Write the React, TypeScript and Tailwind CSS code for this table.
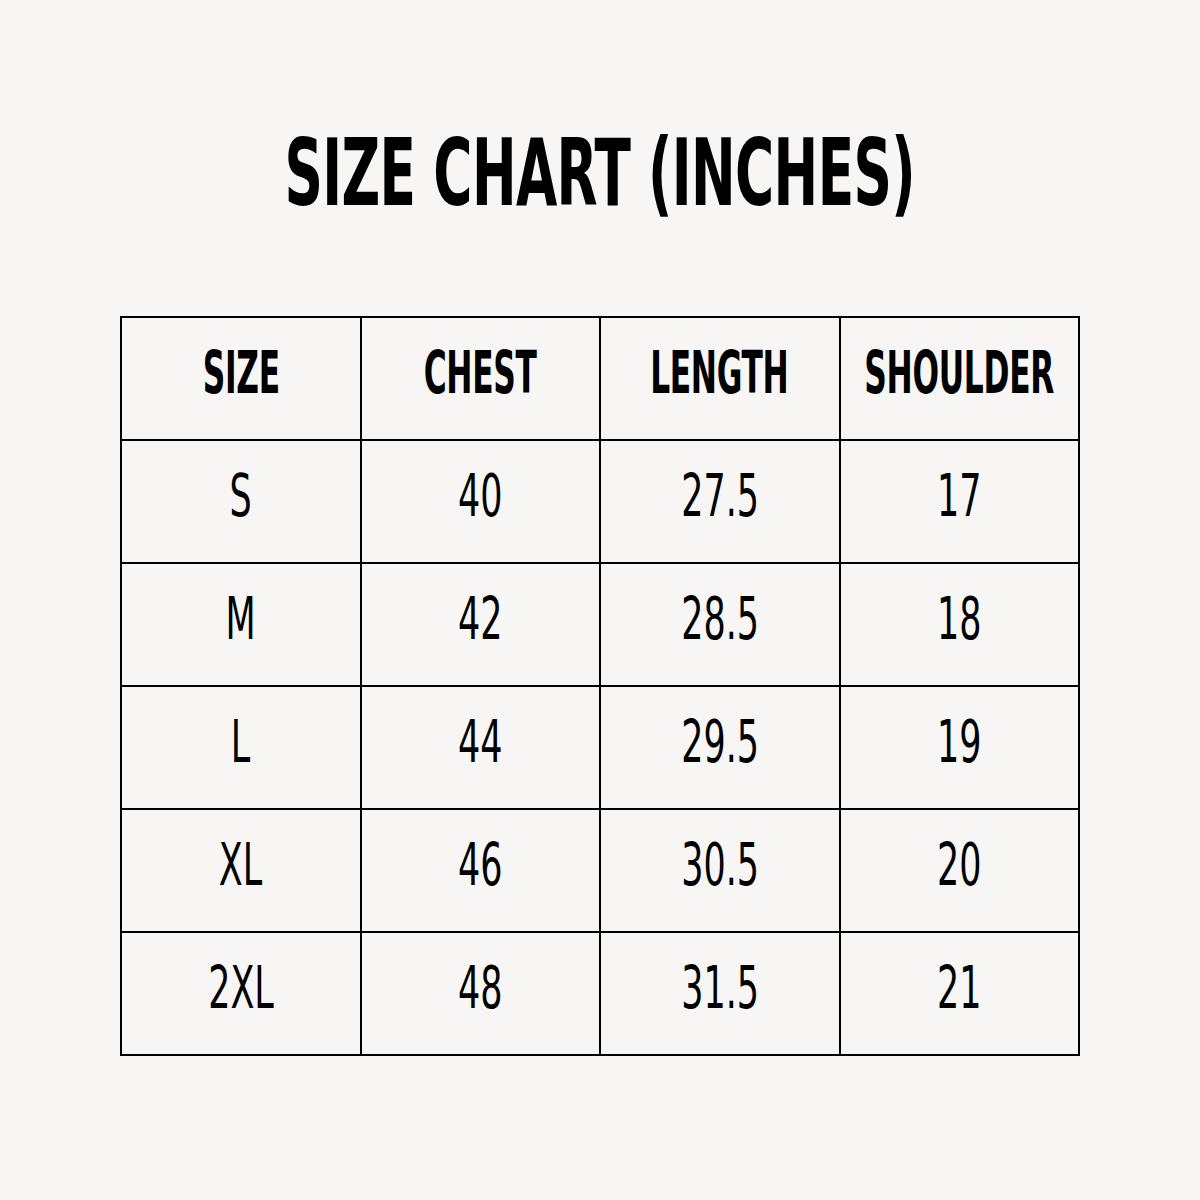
import React from "react";

const rows = [
  ["S", "40", "27.5", "17"],
  ["M", "42", "28.5", "18"],
  ["L", "44", "29.5", "19"],
  ["XL", "46", "30.5", "20"],
  ["2XL", "48", "31.5", "21"],
];

const headers = ["SIZE", "CHEST", "LENGTH", "SHOULDER"];

const font = { fontFamily: '"DejaVu Sans Condensed", "Liberation Sans Narrow", sans-serif' };

function App() {
  return (
    <div className="w-[1200px] h-[1200px] bg-[#f7f6f4] flex flex-col items-center text-black" style={font}>
      <div className="mt-[128px] h-[92px] flex items-center justify-center">
        <span className="inline-block shrink-0 text-[92px] font-bold leading-none tracking-[-1px] scale-x-[0.645] whitespace-nowrap">
          SIZE CHART (INCHES)
        </span>
      </div>
      <table className="mt-[96px] w-[960px] border-collapse table-fixed">
        <thead>
          <tr>
            {headers.map((h) => (
              <th key={h} className="h-[123px] border-2 border-black p-0 align-middle">
                <div className="flex justify-center pb-[12px]">
                  <span className="inline-block shrink-0 text-[58px] font-bold leading-none tracking-[-0.5px] scale-x-[0.6] whitespace-nowrap">
                    {h}
                  </span>
                </div>
              </th>
            ))}
          </tr>
        </thead>
        <tbody>
          {rows.map((r) => (
            <tr key={r[0]}>
              {r.map((c, i) => (
                <td key={i} className="h-[123px] border-2 border-black p-0 align-middle">
                  <div className="flex justify-center pb-[12px]">
                    <span className="inline-block shrink-0 text-[58px] font-normal leading-none scale-x-[0.67] whitespace-nowrap">
                      {c}
                    </span>
                  </div>
                </td>
              ))}
            </tr>
          ))}
        </tbody>
      </table>
    </div>
  );
}

export default App;
